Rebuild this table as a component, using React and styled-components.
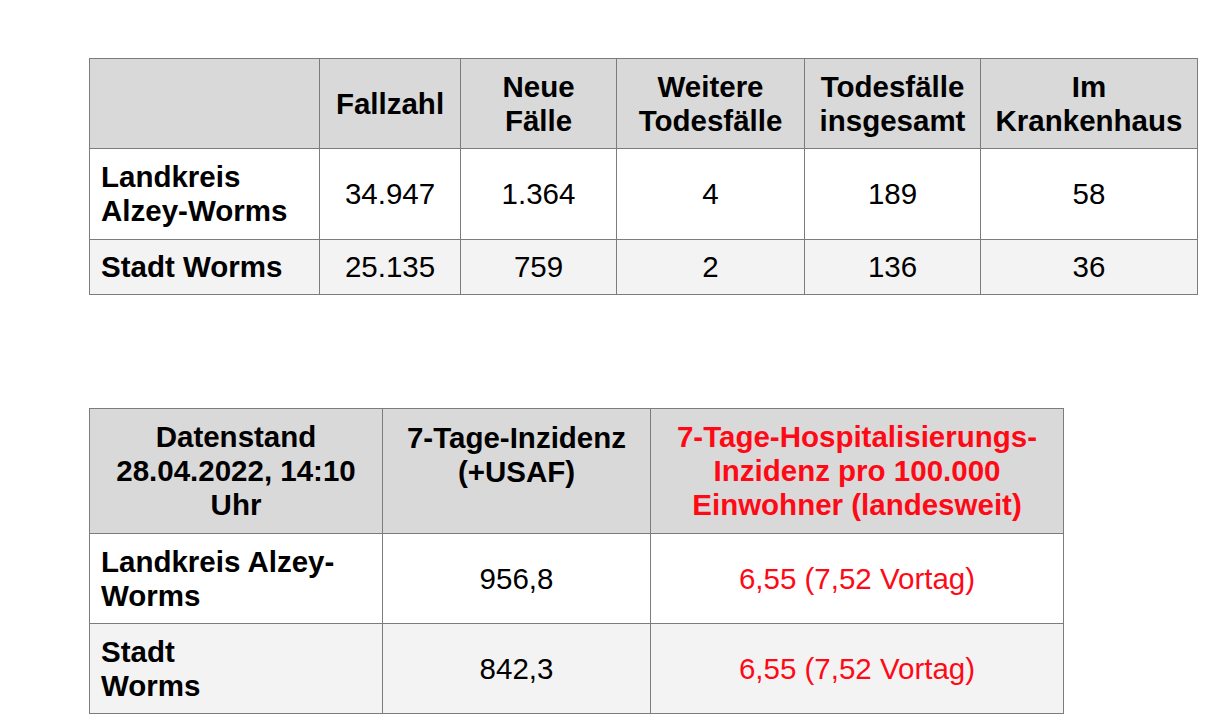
import React from 'react';
import styled, { createGlobalStyle } from 'styled-components';

const GlobalStyle = createGlobalStyle`
  html, body {
    margin: 0;
    padding: 0;
    background: #ffffff;
  }

  body {
    font-family: "Liberation Sans", Arial, sans-serif;
    color: #000000;
  }
`;

const Page = styled.main`
  display: flex;
  flex-direction: column;
  align-items: flex-start;
  gap: 113px;
  padding: 58px 0 0 89px;
`;

const Table = styled.table`
  border-collapse: collapse;
  table-layout: fixed;
  width: ${({ width }) => width}px;
  font-size: 29.5px;
  line-height: 34px;
`;

const HeadRow = styled.tr`
  height: ${({ height }) => height}px;
  background: #d9d9d9;
`;

const BodyRow = styled.tr`
  height: ${({ height }) => height}px;
  background: ${({ striped }) => (striped ? '#f3f3f3' : '#ffffff')};
`;

const HeadCell = styled.th`
  border: 1px solid #7c7c7c;
  padding: 0 6px;
  font-weight: bold;
  text-align: center;
  vertical-align: ${({ top }) => (top ? 'top' : 'middle')};
  padding-top: ${({ top }) => (top ? '12px' : '0')};
  color: ${({ alert }) => (alert ? '#fe0a16' : '#000000')};
`;

const LabelCell = styled.td`
  border: 1px solid #7c7c7c;
  padding: 0 11px;
  font-weight: bold;
  text-align: left;
  vertical-align: middle;
`;

const ValueCell = styled.td`
  border: 1px solid #7c7c7c;
  padding: 0 6px;
  text-align: center;
  vertical-align: middle;
  color: ${({ alert }) => (alert ? '#fe0a16' : '#000000')};
`;

const cases = {
  columns: [230, 141, 156, 188, 176, 217],
  headings: ['', 'Fallzahl', 'Neue\nFälle', 'Weitere\nTodesfälle', 'Todesfälle\ninsgesamt', 'Im\nKrankenhaus'],
  rows: [
    { label: 'Landkreis\nAlzey-Worms', values: ['34.947', '1.364', '4', '189', '58'], height: 91 },
    { label: 'Stadt Worms', values: ['25.135', '759', '2', '136', '36'], height: 55 },
  ],
};

const incidence = {
  columns: [293, 268, 413],
  rows: [
    { label: 'Landkreis Alzey-\nWorms', incidence: '956,8', hospital: '6,55 (7,52 Vortag)' },
    { label: 'Stadt\nWorms', incidence: '842,3', hospital: '6,55 (7,52 Vortag)' },
  ],
};

function Lines({ text }) {
  const parts = text.split('\n');

  return parts.map((part, index) => (
    <React.Fragment key={index}>
      {part}
      {index < parts.length - 1 && <br />}
    </React.Fragment>
  ));
}

function CasesTable() {
  const width = cases.columns.reduce((sum, value) => sum + value, 0);

  return (
    <Table width={width}>
      <colgroup>
        {cases.columns.map((value, index) => <col key={index} style={{ width: value }} />)}
      </colgroup>
      <thead>
        <HeadRow height={90}>
          {cases.headings.map((heading, index) => (
            <HeadCell key={index}><Lines text={heading} /></HeadCell>
          ))}
        </HeadRow>
      </thead>
      <tbody>
        {cases.rows.map((row, index) => (
          <BodyRow key={row.label} height={row.height} striped={index % 2 === 1}>
            <LabelCell><Lines text={row.label} /></LabelCell>
            {row.values.map((value, i) => <ValueCell key={i}>{value}</ValueCell>)}
          </BodyRow>
        ))}
      </tbody>
    </Table>
  );
}

function IncidenceTable() {
  const width = incidence.columns.reduce((sum, value) => sum + value, 0);

  return (
    <Table width={width}>
      <colgroup>
        {incidence.columns.map((value, index) => <col key={index} style={{ width: value }} />)}
      </colgroup>
      <thead>
        <HeadRow height={125}>
          <HeadCell><Lines text={'Datenstand\n28.04.2022, 14:10\nUhr'} /></HeadCell>
          <HeadCell top><Lines text={'7-Tage-Inzidenz\n(+USAF)'} /></HeadCell>
          <HeadCell alert><Lines text={'7-Tage-Hospitalisierungs-\nInzidenz pro 100.000\nEinwohner (landesweit)'} /></HeadCell>
        </HeadRow>
      </thead>
      <tbody>
        {incidence.rows.map((row, index) => (
          <BodyRow key={row.label} height={90} striped={index % 2 === 1}>
            <LabelCell><Lines text={row.label} /></LabelCell>
            <ValueCell>{row.incidence}</ValueCell>
            <ValueCell alert>{row.hospital}</ValueCell>
          </BodyRow>
        ))}
      </tbody>
    </Table>
  );
}

export default function App() {
  return (
    <>
      <GlobalStyle />
      <Page>
        <CasesTable />
        <IncidenceTable />
      </Page>
    </>
  );
}
